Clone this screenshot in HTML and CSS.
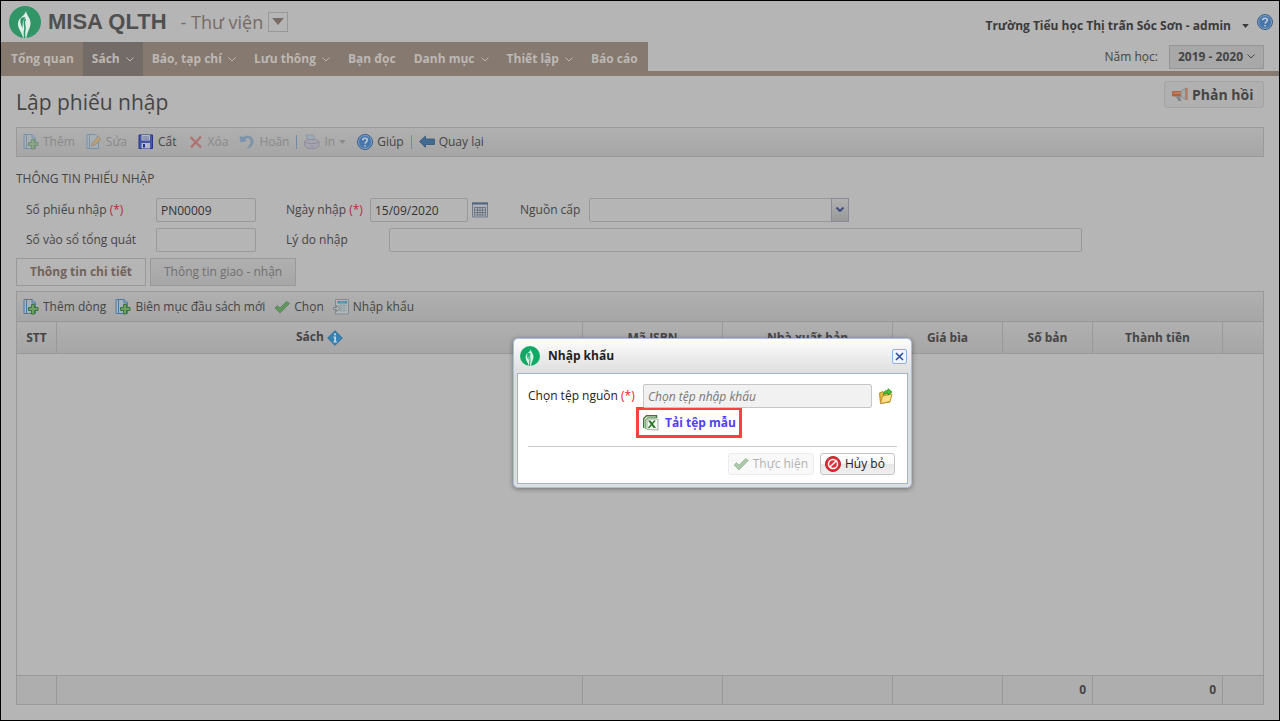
FILE: index.html
```html
<!DOCTYPE html>
<html lang="vi">
<head>
  <meta charset="UTF-8" />
  <title>MISA QLTH - Thư viện</title>
  <meta name="viewport" content="width=device-width, initial-scale=1" />
  <link rel="stylesheet" href="styles.css">
</head>
<body>

  <!-- Icon dùng chung -->
  <svg class="sprite" aria-hidden="true">
    <symbol id="i-logo" viewBox="0 0 32 32">
      <circle cx="16" cy="16" r="16" fill="currentColor" />
      <path fill="#fff" fill-opacity=".85" d="M17 5C17.500 9.500 22 12 21.500 18C21 23 18 26 17.500 31.800L14 31.800C13.500 27 8.500 23 9 17C9.500 11.500 15.500 10.500 17 5Z" />
      <path fill="none" stroke="currentColor" stroke-width="1.600" d="M16.500 13C13.500 17 17 20 15.800 24C15 27 15.800 29 15.500 32" />
      <path fill="currentColor" d="M11.500 13C11 17 12 19.500 14 22.500C13 17.500 14 14.500 16.500 11.500C14 11 12.500 11.500 11.500 13Z" />
    </symbol>
    <symbol id="i-chevron" viewBox="0 0 8 5">
      <path d="M0.500 0.500L4 4L7.500 0.500" fill="none" stroke="currentColor" />
    </symbol>
    <symbol id="i-caret" viewBox="0 0 10 6">
      <path d="M0 0H10L5 6Z" fill="currentColor" />
    </symbol>
    <symbol id="i-help" viewBox="0 0 16 16">
      <circle cx="8" cy="8" r="7.500" fill="#4676ab" stroke="#3c5f8b" />
      <circle cx="8" cy="8" r="6.500" fill="none" stroke="#93a9c2" stroke-width=".8" />
      <path d="M5.700 6.300C5.800 3.500 10.400 3.500 10.300 6.300C10.200 7.800 8.200 7.800 8.100 9.600M8.100 11V12.500" fill="none" stroke="#c4c9ce" stroke-width="1.600" />
    </symbol>
    <symbol id="i-add" viewBox="0 0 16 16">
      <path d="M1 .5H9L12.500 4V14.500H1Z" fill="#a6b3bd" stroke="#4a7ba6" />
      <path d="M3.500 1V14M9 .5V4H12.500" fill="none" stroke="#4a7ba6" />
      <path d="M8.500 5.500H11.500V8.500H15V11.500H11.500V15H8.500V11.500H5.500V8.500H8.500Z" fill="#6fa062" stroke="#39743a" />
    </symbol>
    <symbol id="i-edit" viewBox="0 0 16 16">
      <path d="M1 .5H9L12.500 4V14.500H1Z" fill="#a6b3bd" stroke="#4a7ba6" />
      <path d="M3.500 1V14" fill="none" stroke="#4a7ba6" />
      <path d="M5.500 12L6.300 9L12.500 2.500L15 5L8.500 11.300Z" fill="#c29a50" stroke="#8f7443" />
    </symbol>
    <symbol id="i-save" viewBox="0 0 16 16">
      <path d="M1 1H14.500V14.500H1Z" fill="#4556a8" stroke="#25348a" />
      <path d="M3.500 1H12V6.500H3.500ZM3.500 9H12V14.500H3.500Z" fill="#b5b9c4" />
      <path d="M4.500 3H11M4.500 5H11" stroke="#6873a8" />
      <path d="M5 10H7V13.500H5Z" fill="#25348a" />
    </symbol>
    <symbol id="i-delete" viewBox="0 0 16 16">
      <path d="M2.500 3L13 13.500M13 2.500L3 13.500" stroke="#b53737" stroke-width="2.200" />
    </symbol>
    <symbol id="i-undo" viewBox="0 0 16 16">
      <path d="M.5 1.500L1.500 8.500L8 7L6 5C9 2.800 12.500 5 11.500 9C11 11 9.500 12.500 7.500 15C12 13.500 14.800 10.500 14.500 7C14 1.500 8 .3 3.800 3.200Z" fill="#4c7ba8" />
    </symbol>
    <symbol id="i-print" viewBox="0 0 16 16">
      <path d="M2 1H9L11 6H3.500Z" fill="#93a9b7" stroke="#6284a2" />
      <path d="M.7 7L4 5.500H12L15 7.500V12L11 14.500H4L.7 12Z" fill="#a39fb3" stroke="#777291" />
      <path d="M1 8L4.500 9.500H11L15 8M6 12H10" fill="none" stroke="#777291" />
    </symbol>
    <symbol id="i-back" viewBox="0 0 16 16">
      <path d="M.5 7.500L6.500 2V5H15.500V10.500H6.500V13.500Z" fill="#426b92" stroke="#345779" stroke-width=".8" />
    </symbol>
    <symbol id="i-check" viewBox="0 0 16 16">
      <path d="M1 9L3.500 6.500L6 9L12.500 2.500L15.500 4.500L6 14Z" fill="#649660" stroke="#4d824e" stroke-width=".8" />
    </symbol>
    <symbol id="i-import" viewBox="0 0 16 16">
      <path d="M2.500 .5H15.500V15H2.500Z" fill="#b5b5b5" stroke="#7e8c92" />
      <path d="M4.500 2H14V4.500H4.500Z" fill="#3f91b0" />
      <path d="M5 6.500H14M5 9H14M5 11.500H14M8 2V13M11 2V13" stroke="#8fa3a8" />
      <path d="M.5 8.500H3.500V6.500L7 9.500L3.500 12.500V10.500H.5Z" fill="#b5b5b5" stroke="#6f7c80" stroke-width=".8" />
    </symbol>
    <symbol id="i-calendar" viewBox="0 0 16 16">
      <path d="M.5 1H15.500V15H.5Z" fill="#b0b1b5" stroke="#707a8c" />
      <path d="M0 .5H16V2.500H0Z" fill="#526382" />
      <path d="M2.500 5.500H13.500M2.500 8H13.500M2.500 10.500H13.500M2.500 13H13.500M2.500 5V13.500M5.500 5V13.500M8 5V13.500M10.500 5V13.500M13.500 5V13.500" stroke="#5f697c" stroke-width=".8" />
    </symbol>
    <symbol id="i-info" viewBox="0 0 16 16">
      <path d="M8 .7L15.300 8L8 15.300L.7 8Z" fill="#3583b5" stroke="#2b6c99" />
      <path d="M7 3.500H9V5.200H7ZM6.300 6.500H9V11.500H10V12.500H6.300V11.500H7.200V7.500H6.300Z" fill="#c9d2d8" />
    </symbol>
    <symbol id="i-horn" viewBox="0 0 16 16">
      <path d="M0 5L1 4H9V9.500H1L0 8.500Z" fill="#b0633f" />
      <path d="M1.500 6H9" stroke="#c4886a" stroke-width="1.500" />
      <path d="M9 4L13.500 1.200V12.500L9 9.500Z" fill="#a6a9aa" stroke="#858a8c" stroke-width=".8" />
      <path d="M13.500 .8H15.700V12.800H13.500Z" fill="#b37a61" />
      <path d="M4 9.500H8L9.500 14H6.500Z" fill="#7f8789" />
    </symbol>
    <symbol id="i-folder" viewBox="0 0 16 16">
      <path d="M1.500 5L5 3.500L6.500 5H12V14L2.500 15.500Z" fill="#e5b944" stroke="#b78a25" />
      <path d="M4.500 8L14 6L12 13.500L2.500 15.500Z" fill="#ffe08a" stroke="#c39630" />
      <path d="M5.500 7C5.500 3.500 7 2.500 10 2.500V.7L14 4L10 7V5C8 5 7 5.500 5.500 7Z" fill="#4cc33b" stroke="#258a20" stroke-width=".8" />
    </symbol>
    <symbol id="i-excel" viewBox="0 0 16 16">
      <path d="M.7 13V3.500L3.500 .7H13.500V3" fill="none" stroke="#35783a" stroke-width="1.400" />
      <path d="M2.500 14V5L5 2.700H13" fill="none" stroke="#7cb174" stroke-width="1.400" />
      <path d="M4 4H15V15L4 14.500Z" fill="#f4f6f1" stroke="#a4ada0" />
      <path d="M5 5.500H7.500L13 13H10.500Z" fill="#2b7a2a" />
      <path d="M12 5.500L5.500 13" stroke="#2b7a2a" stroke-width="1.500" />
    </symbol>
    <symbol id="i-cancel" viewBox="0 0 16 16">
      <circle cx="8" cy="8" r="7.500" fill="#e02d36" stroke="#b8242b" />
      <circle cx="8" cy="8" r="4.500" fill="none" stroke="#fff" stroke-width="1.500" />
      <path d="M4.700 11.300L11.300 4.700" stroke="#fff" stroke-width="1.500" />
    </symbol>
  </svg>

  <header class="page-header">
    <div class="brand-row">
      <svg class="logo"><use href="#i-logo" /></svg>
      <span class="brand">MISA QLTH</span>
      <span class="module">- Thư viện</span>
      <button class="module-btn" aria-label="Chọn phân hệ"><svg class="caret"><use href="#i-caret" /></svg></button>
      <button class="user">Trường Tiểu học Thị trấn Sóc Sơn - admin <svg class="caret-sm"><use href="#i-caret" /></svg></button>
      <a class="help" href="#" aria-label="Giúp"><svg class="icon"><use href="#i-help" /></svg></a>
    </div>
    <div class="nav-row">
      <nav>
        <ul>
          <li><a href="#">Tổng quan</a></li>
          <li><a class="active" href="#">Sách <svg class="chevron"><use href="#i-chevron" /></svg></a></li>
          <li><a href="#">Báo, tạp chí <svg class="chevron"><use href="#i-chevron" /></svg></a></li>
          <li><a href="#">Lưu thông <svg class="chevron"><use href="#i-chevron" /></svg></a></li>
          <li><a href="#">Bạn đọc</a></li>
          <li><a href="#">Danh mục <svg class="chevron"><use href="#i-chevron" /></svg></a></li>
          <li><a href="#">Thiết lập <svg class="chevron"><use href="#i-chevron" /></svg></a></li>
          <li><a href="#">Báo cáo</a></li>
        </ul>
      </nav>
      <div class="year">
        <label for="nam-hoc">Năm học:</label>
        <div class="year-box">
          <select id="nam-hoc"><option>2019 - 2020</option></select>
          <svg class="chevron"><use href="#i-chevron" /></svg>
        </div>
      </div>
    </div>
  </header>

  <main>
    <div class="title-row">
      <h1>Lập phiếu nhập</h1>
      <button class="feedback"><svg class="icon"><use href="#i-horn" /></svg>Phản hồi</button>
    </div>

    <div class="toolbar">
      <button disabled><svg class="icon"><use href="#i-add" /></svg>Thêm</button>
      <button disabled><svg class="icon"><use href="#i-edit" /></svg>Sửa</button>
      <button><svg class="icon"><use href="#i-save" /></svg>Cất</button>
      <button disabled><svg class="icon"><use href="#i-delete" /></svg>Xóa</button>
      <button disabled><svg class="icon"><use href="#i-undo" /></svg>Hoãn</button>
      <span class="sep"></span>
      <button disabled><svg class="icon"><use href="#i-print" /></svg>In <svg class="caret-sm"><use href="#i-caret" /></svg></button>
      <button><svg class="icon"><use href="#i-help" /></svg>Giúp</button>
      <span class="sep"></span>
      <button><svg class="icon"><use href="#i-back" /></svg>Quay lại</button>
    </div>

    <h2>THÔNG TIN PHIẾU NHẬP</h2>
    <form class="info">
      <div class="row">
        <label class="first" for="so-phieu">Số phiếu nhập <em>(*)</em></label>
        <input class="short" id="so-phieu" value="PN00009" />
        <label class="date-label" for="ngay-nhap">Ngày nhập <em>(*)</em></label>
        <input class="date" id="ngay-nhap" value="15/09/2020" />
        <button class="pick" type="button" aria-label="Chọn ngày"><svg class="icon"><use href="#i-calendar" /></svg></button>
        <label class="source-label" for="nguon-cap">Nguồn cấp</label>
        <div class="combo">
          <select id="nguon-cap"><option></option></select>
          <span class="trigger"><svg class="chevron"><use href="#i-chevron" /></svg></span>
        </div>
      </div>
      <div class="row">
        <label class="first" for="so-vao-so">Số vào sổ tổng quát</label>
        <input class="short" id="so-vao-so" />
        <label class="reason-label" for="ly-do">Lý do nhập</label>
        <input class="reason" id="ly-do" />
      </div>
    </form>

    <div class="tabs">
      <button class="tab active">Thông tin chi tiết</button>
      <button class="tab">Thông tin giao - nhận</button>
    </div>

    <section class="panel">
      <div class="toolbar">
        <button><svg class="icon"><use href="#i-add" /></svg>Thêm dòng</button>
        <button><svg class="icon"><use href="#i-add" /></svg>Biên mục đầu sách mới</button>
        <button><svg class="icon"><use href="#i-check" /></svg>Chọn</button>
        <button><svg class="icon"><use href="#i-import" /></svg>Nhập khẩu</button>
      </div>
      <table>
        <colgroup>
          <col class="c-stt" /><col /><col class="c-isbn" /><col class="c-nxb" /><col class="c-gia" /><col class="c-so" /><col class="c-tien" /><col class="c-end" />
        </colgroup>
        <thead>
          <tr>
            <th>STT</th>
            <th>Sách <svg class="icon"><use href="#i-info" /></svg></th>
            <th>Mã ISBN</th>
            <th>Nhà xuất bản</th>
            <th>Giá bìa</th>
            <th>Số bản</th>
            <th>Thành tiền</th>
            <th></th>
          </tr>
        </thead>
        <tbody>
          <tr><td colspan="8"></td></tr>
        </tbody>
        <tfoot>
          <tr><td></td><td></td><td></td><td></td><td></td><td>0</td><td>0</td><td></td></tr>
        </tfoot>
      </table>
    </section>
  </main>

  <!-- Hộp thoại nhập khẩu -->
  <div class="dialog" role="dialog" aria-labelledby="dialog-title">
    <div class="dialog-head">
      <svg class="dialog-logo"><use href="#i-logo" /></svg>
      <span id="dialog-title">Nhập khẩu</span>
      <button class="close" aria-label="Đóng"><svg viewBox="0 0 9 9"><path d="M1 1L8 8M8 1L1 8" stroke="#2b4f9e" stroke-width="1.600" /></svg></button>
    </div>
    <div class="dialog-body">
      <div class="file-row">
        <label for="tep-nguon">Chọn tệp nguồn <em>(*)</em></label>
        <input id="tep-nguon" placeholder="Chọn tệp nhập khẩu" />
        <button class="pick" aria-label="Chọn tệp"><svg class="icon"><use href="#i-folder" /></svg></button>
      </div>
      <a class="template" href="#"><svg class="icon"><use href="#i-excel" /></svg>Tải tệp mẫu</a>
      <div class="actions">
        <button disabled><svg class="icon"><use href="#i-check" /></svg>Thực hiện</button>
        <button><svg class="icon"><use href="#i-cancel" /></svg>Hủy bỏ</button>
      </div>
    </div>
  </div>

</body>
</html>
```
FILE: styles.css
```css
* {
  box-sizing: border-box;
}
body {
  margin: 0;
  min-height: 100vh;
  display: flex;
  flex-direction: column;
  border: 1px solid #000;
  background: #b5b5b5;
  color: #454545;
  font-family: "Open Sans", "Noto Sans", sans-serif;
  font-size: 12px;
  line-height: 16px;
}
button,
input,
select {
  font: inherit;
  color: inherit;
  margin: 0;
}
button {
  display: flex;
  align-items: center;
  background: none;
  border: none;
  padding: 0;
  white-space: nowrap;
}
a {
  color: inherit;
  text-decoration: none;
}
label {
  white-space: nowrap;
}
em {
  font-style: normal;
  color: #b8293c;
}
svg {
  flex: none;
}
.sprite {
  display: none;
}
.icon {
  width: 16px;
  height: 16px;
}
.chevron {
  width: 8px;
  height: 5px;
}
.caret {
  width: 12px;
  height: 7px;
}
.caret-sm {
  width: 7px;
  height: 4px;
}

/* Đầu trang */
.brand-row {
  display: flex;
  align-items: center;
  height: 41px;
  padding: 0 6px 0 8px;
}
.logo {
  width: 32px;
  height: 32px;
  color: #329568;
  margin-right: 7px;
}
.brand {
  font: bold 22px "Liberation Sans", Arial, sans-serif;
  color: #505050;
}
.module {
  margin-left: 14px;
  font-size: 18px;
  color: #756b65;
}
.module-btn {
  width: 20px;
  height: 20px;
  margin-left: 5px;
  justify-content: center;
  border: 1px solid #999;
  color: #7a6c63;
}
.user {
  margin-left: auto;
  gap: 11px;
  font-weight: bold;
  padding-top: 8px;
  color: #3b3b3b;
}
.help {
  display: flex;
  margin-left: 8px;
}
.nav-row {
  display: flex;
  height: 34px;
}
nav ul {
  display: flex;
  height: 100%;
  margin: 0;
  padding: 0 1px;
  list-style: none;
  background: #857970;
}
nav a {
  display: flex;
  align-items: center;
  gap: 6px;
  height: 100%;
  padding: 0 9px;
  font-weight: bold;
  color: #bdb8b4;
  white-space: nowrap;
}
nav a.active {
  background: #736b67;
}
.year {
  flex: 1;
  display: flex;
  align-items: center;
  justify-content: flex-end;
  gap: 11px;
  padding-right: 15px;
  border-bottom: 5px solid #857970;
}
.year-box {
  display: flex;
  align-items: center;
  position: relative;
}
.year select {
  appearance: none;
  width: 95px;
  height: 24px;
  padding: 0 8px;
  border: 1px solid #969696;
  background: #a8a8a8;
  font-weight: bold;
}
.year .chevron {
  position: absolute;
  right: 9px;
  pointer-events: none;
}

main {
  flex: 1;
  display: flex;
  flex-direction: column;
  padding: 5px 15px 15px;
}
.title-row {
  display: flex;
  justify-content: space-between;
  height: 46px;
}
h1 {
  margin: 6px 0 0;
  font-size: 21px;
  line-height: 30px;
  font-weight: normal;
}
.feedback {
  width: 100px;
  height: 27px;
  gap: 4px;
  padding-left: 7px;
  border: 1px solid #a3a3a3;
  border-radius: 3px;
  background: #b0b0b0;
  font-size: 14px;
  font-weight: bold;
}

/* Thanh công cụ */
.toolbar {
  display: flex;
  align-items: center;
  gap: 11px;
  height: 30px;
  padding: 0 6px;
  border: 1px solid #999;
  background: linear-gradient(#b0b0b0, #a6a6a6);
}
.toolbar button {
  gap: 4px;
}
button:disabled {
  color: #898989;
}
button:disabled .icon {
  opacity: 0.5;
}
.sep {
  width: 1px;
  height: 14px;
  margin: 0 -4px;
  background: #7389a8;
}

h2 {
  margin: 14px 0 11px;
  font-size: 12px;
  line-height: 16px;
  font-weight: normal;
}
.info {
  display: flex;
  flex-direction: column;
  gap: 6px;
  padding-left: 10px;
}
.row {
  display: flex;
  align-items: center;
}
.row input,
.combo select {
  height: 24px;
  padding: 0 4px;
  border: 1px solid #999;
  border-radius: 2px;
  background: #b5b5b5;
  color: #333;
}
.first {
  width: 130px;
}
.short {
  width: 100px;
  margin-right: 30px;
}
.date-label {
  width: 84px;
}
.date {
  width: 98px;
}
.pick {
  margin: 0 4px;
}
.source-label {
  width: 69px;
  margin-left: 28px;
}
.combo {
  display: flex;
  width: 260px;
  position: relative;
}
.combo select {
  appearance: none;
  width: 100%;
}
.trigger {
  position: absolute;
  right: 0;
  display: flex;
  justify-content: center;
  align-items: center;
  width: 18px;
  height: 24px;
  padding-bottom: 2px;
  border: 1px solid #888b98;
  background: linear-gradient(#b0b0b0, #999);
  color: #3c4c7e;
  pointer-events: none;
}
.trigger .chevron {
  stroke-width: 2;
}
.reason-label {
  width: 103px;
}
.reason {
  flex: 1;
  max-width: 693px;
}

.tabs {
  display: flex;
  gap: 4px;
  margin: 6px 0 5px;
}
.tab {
  height: 28px;
  padding: 0 13px;
  border: 1px solid #999;
  background: linear-gradient(#b0b0b0, #a6a6a6);
  color: #707070;
}
.tab.active {
  background: #b5b5b5;
  color: #71635b;
  font-weight: bold;
}

/* Bảng chi tiết */
.panel {
  flex: 1;
  display: flex;
  flex-direction: column;
}
.panel .toolbar {
  gap: 9px;
  height: 31px;
}
table {
  flex: 1;
  width: 100%;
  table-layout: fixed;
  border-collapse: collapse;
  margin-top: -1px;
}
th,
td {
  border: 1px solid #999;
  padding: 0 6px;
}
th {
  height: 32px;
  background: linear-gradient(#b0b0b0, #a6a6a6);
}
th .icon {
  vertical-align: middle;
}
tfoot td {
  height: 29px;
  background: #aeaeae;
  text-align: right;
  font-weight: bold;
}
.c-stt { width: 40px; }
.c-isbn { width: 140px; }
.c-nxb { width: 170px; }
.c-gia { width: 110px; }
.c-so { width: 90px; }
.c-tien { width: 130px; }
.c-end { width: 41px; }

/* Hộp thoại */
.dialog {
  position: absolute;
  top: 338px;
  left: 513px;
  width: 399px;
  padding: 0 3px 3px;
  border: 1px solid #a9bfdf;
  border-radius: 5px;
  background: linear-gradient(#fdfdfd, #dedede 34px);
  box-shadow: 0 1px 5px rgba(0, 0, 0, 0.4);
  color: #222;
}
.dialog-head {
  display: flex;
  align-items: center;
  height: 34px;
  padding: 0 1px 0 3px;
  font-weight: bold;
}
.dialog-logo {
  width: 20px;
  height: 20px;
  margin-right: 8px;
  color: #10aa66;
}
.close {
  width: 15px;
  height: 15px;
  margin-left: auto;
  justify-content: center;
  border: 1px solid #8bb0e4;
  border-radius: 2px;
  background: #eef5ff;
}
.close svg {
  width: 9px;
  height: 9px;
}
.dialog-body {
  padding: 10px;
  padding-bottom: 8px;
  border: 1px solid #a3b4c8;
  background: #fff;
}
.dialog em {
  color: #f02020;
}
.file-row {
  display: flex;
  align-items: center;
}
.file-row label {
  width: 115px;
}
.file-row input {
  flex: 1;
  min-width: 0;
  height: 24px;
  padding: 0 4px;
  border: 1px solid #c6c6c6;
  border-radius: 2px;
  background: #f1f1f1;
}
.file-row input::placeholder {
  font-style: italic;
  color: #777;
}
.file-row .pick {
  margin: 0 3px 0 6px;
}
.template {
  display: flex;
  align-items: center;
  gap: 6px;
  width: 106px;
  height: 31px;
  margin: -1px 0 0 108px;
  padding-left: 4px;
  border: 3px solid #fb4040;
  color: #5140fb;
  font-weight: bold;
  white-space: nowrap;
}
.actions {
  display: flex;
  justify-content: flex-end;
  gap: 6px;
  margin-top: 8px;
  padding: 6px 2px 0 0;
  border-top: 1px solid #c9c9c9;
}
.actions button {
  gap: 4px;
  min-width: 75px;
  height: 22px;
  padding: 0 5px 0 4px;
  border: 1px solid #c4c4c4;
  border-radius: 3px;
  background: linear-gradient(#fff, #f8f8f8 50%, #e6e6e6 50%, #f0f0f0);
}
.actions button:disabled {
  border-color: #ececec;
  background: #f9f9f9;
  color: #b3b3b3;
}
```
